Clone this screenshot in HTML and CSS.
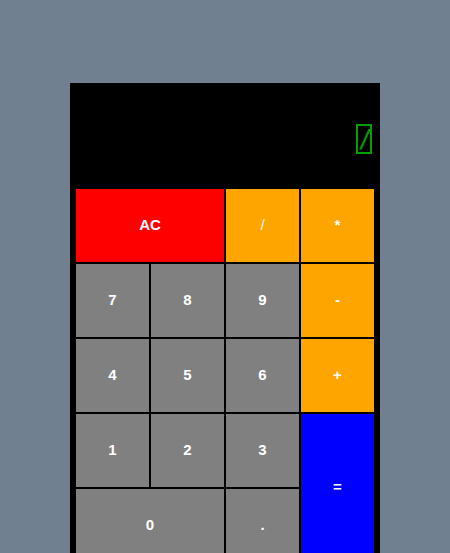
FILE: index.html
```html
<!DOCTYPE html>
<html>
<head>
<meta charset="utf-8">
<link rel="stylesheet" href="styles.css">
</head>
<body>
<div class="calc">
  <div class="display"><span class="readout">/</span></div>
  <div class="keys">
    <div class="key red wide">AC</div>
    <div class="key orange thin">/</div>
    <div class="key orange">*</div>
    <div class="key">7</div>
    <div class="key">8</div>
    <div class="key">9</div>
    <div class="key orange">-</div>
    <div class="key">4</div>
    <div class="key">5</div>
    <div class="key">6</div>
    <div class="key orange">+</div>
    <div class="key">1</div>
    <div class="key">2</div>
    <div class="key">3</div>
    <div class="key blue tall">=</div>
    <div class="key wide">0</div>
    <div class="key">.</div>
  </div>
</div>
</body>
</html>
```
FILE: styles.css
```css
html, body {
  margin: 0;
  padding: 0;
  background: #708090;
  height: 100%;
  overflow: hidden;
}
.calc {
  width: 310px;
  margin: 83px auto 0;
  background: #000;
  padding: 0 5px;
  box-sizing: border-box;
}
.display {
  height: 105px;
  display: flex;
  align-items: center;
  justify-content: flex-end;
  padding-right: 3px;
  padding-top: 7px;
  box-sizing: border-box;
}
.readout {
  display: inline-block;
  width: 12px;
  height: 26px;
  border: 2px solid #00a000;
  color: #00a000;
  font-family: "DejaVu Sans Mono", monospace;
  font-size: 24px;
  line-height: 26px;
  text-align: center;
  overflow: hidden;
}
.keys {
  display: grid;
  grid-template-columns: repeat(4, 75px);
  grid-auto-rows: 75px;
}
.key {
  border: 1px solid #000;
  background: #808080;
  color: #fff;
  font-family: "Liberation Sans", Arial, sans-serif;
  font-weight: bold;
  font-size: 15px;
  display: flex;
  align-items: center;
  justify-content: center;
  padding-bottom: 3px;
  box-sizing: border-box;
}
.thin { font-weight: normal; }
.red { background: #ff0000; }
.orange { background: #ffa500; }
.blue { background: #0000ff; }
.wide { grid-column: span 2; }
.tall { grid-row: span 2; }
```
